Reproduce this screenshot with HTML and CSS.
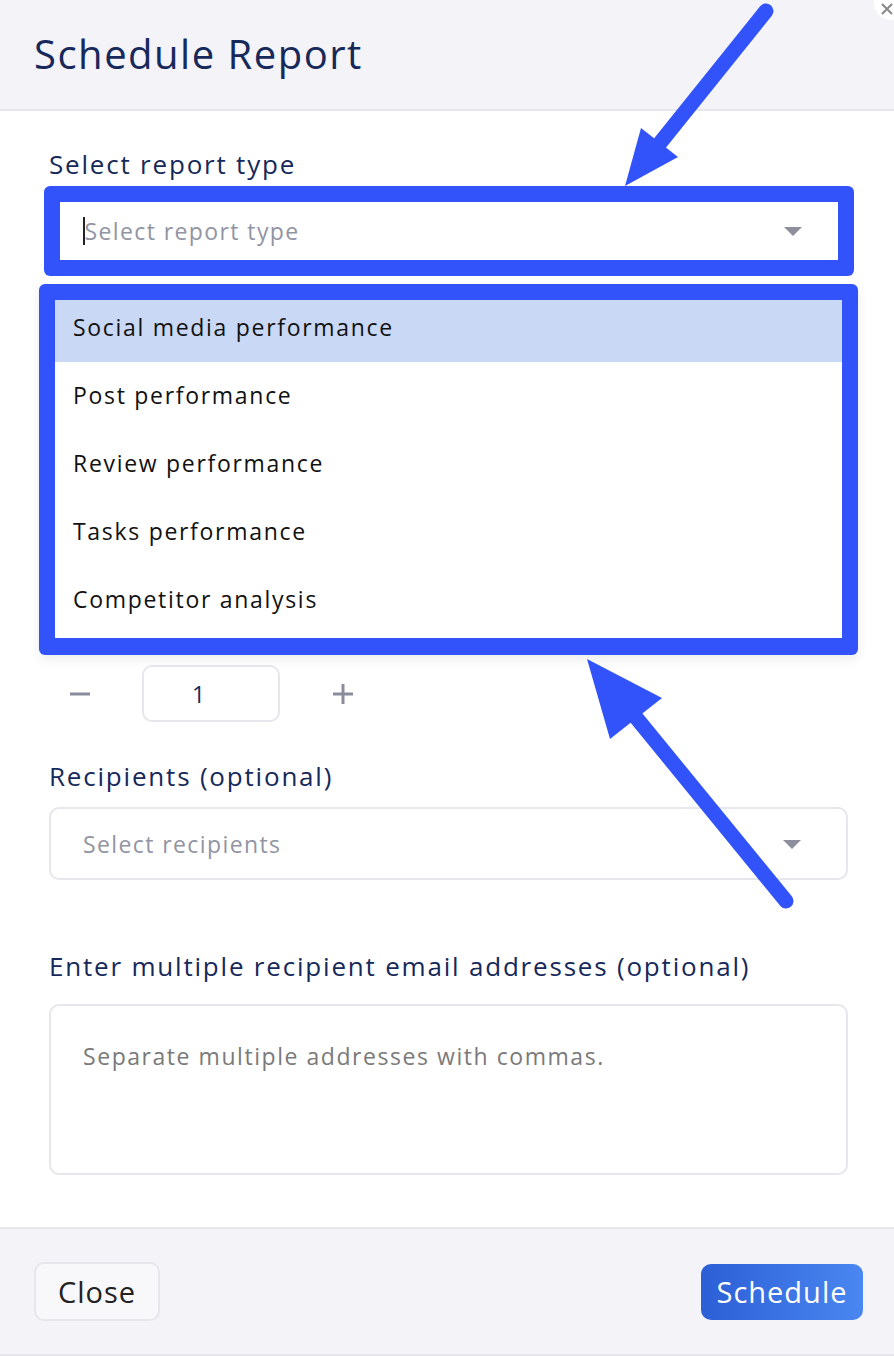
FILE: index.html
```html
<!DOCTYPE html>
<html lang="en">
  <head>
    <meta charset="UTF-8" />
    <meta name="viewport" content="width=device-width, initial-scale=1.0" />
    <title>Schedule Report</title>
    <link rel="stylesheet" href="styles.css">
  </head>

  <body>
    <div class="modal">
      <header class="modal-header">
        <h1>Schedule Report</h1>
        <button class="close-x" aria-label="Close">
          <svg width="14" height="14" viewBox="0 0 14 14"><path d="M2 2L12 12M12 2L2 12" stroke="#888" stroke-width="2" fill="none"/></svg>
        </button>
      </header>

      <main class="modal-body">
        <div class="field report-field">
          <label class="field-label">Select report type</label>
          <div class="highlight select-frame">
            <div class="select select-active">
              <span class="caret"></span>
              <span class="placeholder">Select report type</span>
              <span class="arrow"></span>
            </div>
          </div>

          <div class="highlight menu-frame">
            <ul class="menu">
              <li class="menu-item active">Social media performance</li>
              <li class="menu-item">Post performance</li>
              <li class="menu-item">Review performance</li>
              <li class="menu-item">Tasks performance</li>
              <li class="menu-item">Competitor analysis</li>
            </ul>
          </div>
        </div>

        <div class="covered"></div>

        <div class="stepper">
          <button class="step-btn minus" aria-label="Decrease">
            <svg width="22" height="22" viewBox="0 0 22 22"><path d="M1 11H21" stroke="#8a8c9c" stroke-width="3" fill="none"/></svg>
          </button>
          <div class="step-value">1</div>
          <button class="step-btn plus" aria-label="Increase">
            <svg width="22" height="22" viewBox="0 0 22 22"><path d="M1 11H21M11 1V21" stroke="#8a8c9c" stroke-width="3" fill="none"/></svg>
          </button>
        </div>

        <div class="field recipients-field">
          <label class="field-label">Recipients (optional)</label>
          <div class="select select-plain">
            <span class="placeholder">Select recipients</span>
            <span class="arrow"></span>
          </div>
        </div>

        <div class="field emails-field">
          <label class="field-label">Enter multiple recipient email addresses (optional)</label>
          <div class="textarea">
            <span class="placeholder dark">Separate multiple addresses with commas.</span>
          </div>
        </div>
      </main>

      <footer class="modal-footer">
        <button class="btn btn-light">Close</button>
        <button class="btn btn-primary">Schedule</button>
      </footer>

      <svg class="annotations" width="894" height="1356" viewBox="0 0 894 1356">
        <line x1="766" y1="11" x2="660" y2="143" stroke="#3253fa" stroke-width="15" stroke-linecap="round" />
        <polygon points="625,186 641,128 678,157" fill="#3253fa" />
        <line x1="786" y1="901" x2="634" y2="715" stroke="#3253fa" stroke-width="15" stroke-linecap="round" />
        <polygon points="587,659 610,739 662,698" fill="#3253fa" />
      </svg>
    </div>
  </body>
</html>
```

FILE: styles.css
```css
* {
  box-sizing: border-box;
  margin: 0;
  padding: 0;
}

body {
  font-family: "Open Sans", "Noto Sans", sans-serif;
  background-color: #fff;
  color: #1a2b5c;
}

.modal {
  position: relative;
  width: 894px;
  height: 1356px;
  overflow: hidden;
}

.modal-header {
  height: 111px;
  background-color: #f3f3f8;
  border-bottom: 2px solid #e6e6ec;
  padding: 29px 34px 0;
}

.modal-header h1 {
  font-size: 40px;
  font-weight: 400;
  line-height: 50px;
  color: #16295a;
  letter-spacing: 1.5px;
}

.close-x {
  position: absolute;
  top: -14px;
  right: -14px;
  width: 34px;
  height: 34px;
  border-radius: 50%;
  border: none;
  background-color: #fff;
  display: flex;
  align-items: flex-end;
  justify-content: flex-start;
  padding: 0 0 4px 6px;
}

.modal-body {
  padding: 37px 46px 0 49px;
}

.field-label {
  display: block;
  font-size: 26px;
  line-height: 32px;
  letter-spacing: 1.8px;
  color: #16295a;
}

.report-field {
  position: relative;
}

.highlight {
  background-color: #3253fa;
  border-radius: 6px;
  padding: 16px;
}

.select-frame {
  margin: 6px -6px 0 -5px;
}

.select {
  position: relative;
  display: flex;
  align-items: center;
  background-color: #fff;
}

.select-active {
  height: 58px;
  padding-left: 23px;
}

.select-plain {
  height: 73px;
  margin-top: 15px;
  border: 2px solid #e6e6ec;
  border-radius: 10px;
  padding-left: 32px;
}

.caret {
  width: 1.5px;
  height: 28px;
  background-color: #222;
}

.placeholder {
  color: #9294a3;
  font-size: 23px;
  letter-spacing: 1.4px;
}

.placeholder.dark {
  color: #7a7a7a;
  letter-spacing: 1.55px;
}

.arrow {
  position: absolute;
  right: 36px;
  top: 50%;
  margin-top: -4px;
  border-left: 9px solid transparent;
  border-right: 9px solid transparent;
  border-top: 9px solid #8e8f9c;
}

.select-plain .arrow {
  right: 45px;
}

.menu-frame {
  position: absolute;
  top: 136px;
  left: -10px;
  width: 819px;
  padding: 16px 16px 17px;
  z-index: 2;
  box-shadow: 0 4px 12px rgba(0, 0, 0, 0.08);
}

.menu {
  list-style: none;
  background-color: #fff;
  padding-bottom: 4px;
}

.menu-item {
  height: 62px;
  margin-bottom: 6px;
  padding: 0 0 8px 18px;
  display: flex;
  align-items: center;
  font-size: 23px;
  letter-spacing: 1.7px;
  color: #111;
}

.menu-item:last-child {
  margin-bottom: 0;
}

.menu-item.active {
  background-color: #c9d8f4;
}

.covered {
  height: 389px;
}

.stepper {
  display: flex;
  align-items: center;
  height: 57px;
}

.step-btn {
  border: none;
  background: none;
  display: flex;
  align-items: center;
}

.step-btn.minus {
  width: 93px;
  padding-left: 20px;
}

.step-btn.plus {
  width: 126px;
  justify-content: center;
}

.step-value {
  width: 138px;
  height: 57px;
  border: 2px solid #e6e6ec;
  border-radius: 10px;
  display: flex;
  align-items: center;
  padding-left: 48px;
  font-size: 23px;
  color: #16295a;
}

.recipients-field {
  margin-top: 38px;
}

.emails-field {
  margin-top: 70px;
}

.textarea {
  margin-top: 22px;
  height: 171px;
  border: 2px solid #e6e6ec;
  border-radius: 10px;
  padding: 34px 32px;
}

.modal-footer {
  position: absolute;
  left: 0;
  right: 0;
  bottom: 0;
  height: 129px;
  background-color: #f3f3f8;
  border-top: 2px solid #e6e6ec;
  border-bottom: 2px solid #e6e6ec;
  display: flex;
  align-items: center;
  justify-content: space-between;
  padding: 0 31px 0 34px;
}

.btn {
  font-family: "Open Sans", "Noto Sans", sans-serif;
  font-size: 29px;
  letter-spacing: 1px;
  border-radius: 10px;
  cursor: pointer;
}

.btn-light {
  width: 126px;
  height: 59px;
  background-color: #f8f8fb;
  border: 2px solid #e6e6ec;
  color: #222;
}

.btn-primary {
  width: 162px;
  height: 56px;
  border: none;
  color: #fff;
  background: linear-gradient(90deg, #2c5fd6, #4a87f1);
}

.annotations {
  position: absolute;
  top: 0;
  left: 0;
  z-index: 5;
  pointer-events: none;
}
```
